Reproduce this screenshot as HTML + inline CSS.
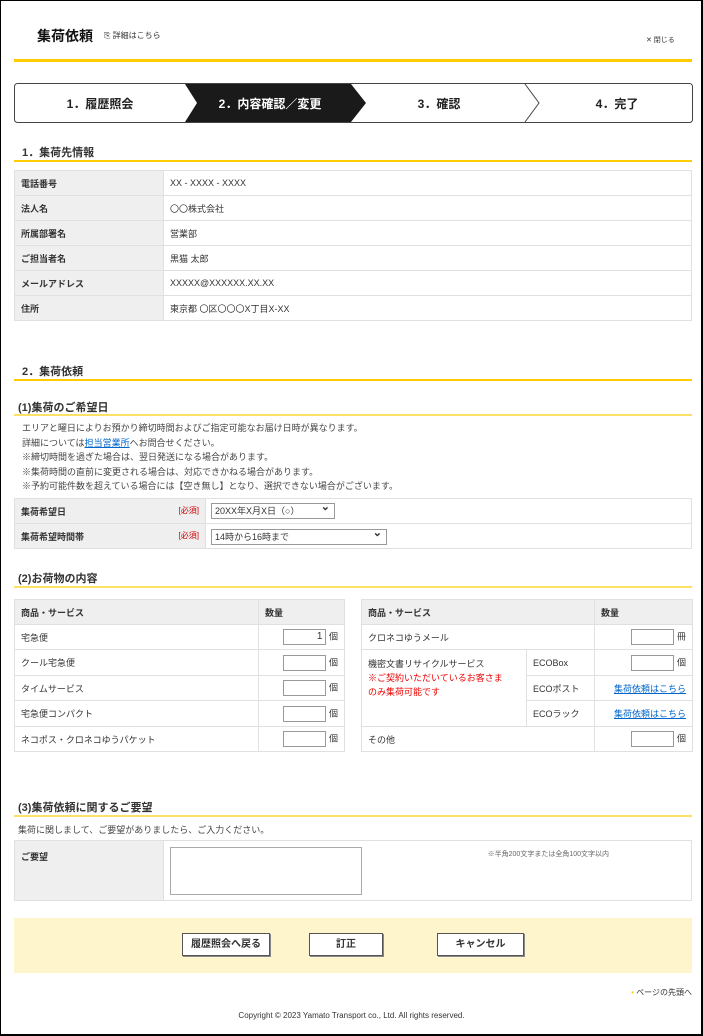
<!DOCTYPE html>
<html><head><meta charset="utf-8"><style>
*{margin:0;padding:0;box-sizing:border-box}
body{width:703px;height:1036px;background:#fff;font-family:"Liberation Sans","Noto Sans CJK JP",sans-serif;color:#333;position:relative;overflow:hidden;font-size:9px}
.a{position:absolute}
.frame{left:0;top:0;width:703px;height:1036px;border:1px solid #000;border-width:1px 2px 2px 1px}
.yl{background:#ffcc00}
.yl2{background:#ffe066}
.h{font-weight:bold;font-size:11px;color:#333}
table{border-collapse:collapse;position:absolute}
td{border:1px solid #e0e0e0;font-size:9px;padding:0 6px;color:#333}
td.l{background:#efefef;font-weight:bold}
.inp{display:inline-block;width:43px;height:16px;border:1px solid #999;vertical-align:middle;text-align:right;padding-right:3px;font-size:10px;line-height:14px}
.sel{position:absolute;border:1px solid #999;background:#fff;font-size:9px;padding-left:3px;line-height:14px;height:16px}
.sel:after{content:"⌄";position:absolute;right:4px;top:-4px;font-size:11px;font-weight:bold}
.btn{position:absolute;border:1px solid #555;background:#fff;top:933px;height:23px;font-weight:bold;font-size:10px;text-align:center;line-height:21px;box-shadow:1px 1px 0 #888}
a{color:#0066cc;text-decoration:underline}
</style></head><body>
<div class="a frame"></div>
<div class="a" style="left:37px;top:26px;font-size:14px;font-weight:bold;color:#111">集荷依頼</div>
<div class="a" style="left:104px;top:30px;font-size:8px;color:#333">⎘ 詳細はこちら</div>
<div class="a" style="left:646px;top:35px;font-size:7px;color:#333">✕ 閉じる</div>
<div class="a yl" style="left:14px;top:59px;width:678px;height:3px"></div>

<svg class="a" style="left:14px;top:83px" width="679" height="40">
<rect x="0.5" y="0.5" width="678" height="39" rx="3" fill="#fff" stroke="#444"/>
<polygon points="171,1 337,1 352,20 337,39 171,39 183,20" fill="#1a1a1a"/>
<polyline points="511,1 525,20 511,39" fill="none" stroke="#444"/>
<text x="86" y="25" font-size="12" font-weight="bold" fill="#222" text-anchor="middle" font-family="Liberation Sans,Noto Sans CJK JP,sans-serif">1．履歴照会</text>
<text x="256" y="25" font-size="12" font-weight="bold" fill="#fff" text-anchor="middle" font-family="Liberation Sans,Noto Sans CJK JP,sans-serif">2．内容確認／変更</text>
<text x="425" y="25" font-size="12" font-weight="bold" fill="#222" text-anchor="middle" font-family="Liberation Sans,Noto Sans CJK JP,sans-serif">3．確認</text>
<text x="603" y="25" font-size="12" font-weight="bold" fill="#222" text-anchor="middle" font-family="Liberation Sans,Noto Sans CJK JP,sans-serif">4．完了</text>
</svg>

<div class="a h" style="left:22px;top:144px">1．集荷先情報</div>
<div class="a yl" style="left:14px;top:160px;width:678px;height:2px"></div>
<table style="left:14px;top:170px;width:678px">
<tr style="height:25px"><td class="l" style="width:149px">電話番号</td><td>XX - XXXX - XXXX</td></tr>
<tr style="height:25px"><td class="l">法人名</td><td>〇〇株式会社</td></tr>
<tr style="height:25px"><td class="l">所属部署名</td><td>営業部</td></tr>
<tr style="height:25px"><td class="l">ご担当者名</td><td>黒猫 太郎</td></tr>
<tr style="height:25px"><td class="l">メールアドレス</td><td>XXXXX@XXXXXX.XX.XX</td></tr>
<tr style="height:25px"><td class="l">住所</td><td>東京都 〇区〇〇〇X丁目X-XX</td></tr>
</table>

<div class="a h" style="left:22px;top:363px">2．集荷依頼</div>
<div class="a yl" style="left:14px;top:379px;width:678px;height:2px"></div>
<div class="a h" style="left:18px;top:399px">(1)集荷のご希望日</div>
<div class="a yl2" style="left:14px;top:414px;width:678px;height:2px"></div>
<div class="a" style="left:22px;top:421px;line-height:14.5px;font-size:9px;color:#444">エリアと曜日によりお預かり締切時間およびご指定可能なお届け日時が異なります。<br>詳細については<a>担当営業所</a>へお問合せください。<br>※締切時間を過ぎた場合は、翌日発送になる場合があります。<br>※集荷時間の直前に変更される場合は、対応できかねる場合があります。<br>※予約可能件数を超えている場合には【空き無し】となり、選択できない場合がございます。</div>
<table style="left:14px;top:498px;width:678px">
<tr style="height:25px"><td class="l" style="width:191px">集荷希望日<span style="float:right;color:#cc0000;font-weight:normal;font-size:8px">[必須]</span></td><td></td></tr>
<tr style="height:25px"><td class="l">集荷希望時間帯<span style="float:right;color:#cc0000;font-weight:normal;font-size:8px">[必須]</span></td><td></td></tr>
</table>
<div class="sel" style="left:211px;top:503px;width:124px">20XX年X月X日（○）</div>
<div class="sel" style="left:211px;top:529px;width:176px">14時から16時まで</div>

<div class="a h" style="left:18px;top:570px">(2)お荷物の内容</div>
<div class="a yl2" style="left:14px;top:586px;width:678px;height:2px"></div>
<table style="left:14px;top:599px;width:331px">
<tr style="height:25px;background:#efefef;font-weight:bold"><td class="l" style="width:244px">商品・サービス</td><td class="l">数量</td></tr>
<tr style="height:25px"><td>宅急便</td><td style="text-align:right"><span class="inp">1</span> 個</td></tr>
<tr style="height:26px"><td>クール宅急便</td><td style="text-align:right"><span class="inp"></span> 個</td></tr>
<tr style="height:25px"><td>タイムサービス</td><td style="text-align:right"><span class="inp"></span> 個</td></tr>
<tr style="height:26px"><td>宅急便コンパクト</td><td style="text-align:right"><span class="inp"></span> 個</td></tr>
<tr style="height:25px"><td>ネコポス・クロネコゆうパケット</td><td style="text-align:right"><span class="inp"></span> 個</td></tr>
</table>
<table style="left:361px;top:599px;width:332px">
<tr style="height:25px"><td class="l" colspan="2">商品・サービス</td><td class="l" style="width:98px">数量</td></tr>
<tr style="height:25px"><td colspan="2">クロネコゆうメール</td><td style="text-align:right"><span class="inp"></span> 冊</td></tr>
<tr style="height:26px"><td rowspan="3" style="width:165px;vertical-align:top;padding-top:7px;line-height:14px">機密文書リサイクルサービス<br><span style="color:#ee0000">※ご契約いただいているお客さま<br>のみ集荷可能です</span></td><td>ECOBox</td><td style="text-align:right"><span class="inp"></span> 個</td></tr>
<tr style="height:25px"><td>ECOポスト</td><td style="text-align:right"><a>集荷依頼はこちら</a></td></tr>
<tr style="height:26px"><td>ECOラック</td><td style="text-align:right"><a>集荷依頼はこちら</a></td></tr>
<tr style="height:25px"><td colspan="2">その他</td><td style="text-align:right"><span class="inp"></span> 個</td></tr>
</table>

<div class="a h" style="left:18px;top:799px">(3)集荷依頼に関するご要望</div>
<div class="a yl2" style="left:14px;top:815px;width:678px;height:2px"></div>
<div class="a" style="left:18px;top:823px;font-size:9px;color:#444">集荷に関しまして、ご要望がありましたら、ご入力ください。</div>
<table style="left:14px;top:840px;width:678px">
<tr style="height:60px"><td class="l" style="width:149px;vertical-align:top;padding-top:9px">ご要望</td><td style="vertical-align:top;padding-top:8px"><span style="float:right;margin-right:76px;font-size:7px;color:#666">※半角200文字または全角100文字以内</span></td></tr>
</table>
<div class="a" style="left:170px;top:847px;width:192px;height:48px;border:1px solid #aaa;background:#fff"></div>
<div class="a" style="left:14px;top:918px;width:678px;height:55px;background:#fff5cc"></div>
<div class="btn" style="left:182px;width:88px">履歴照会へ戻る</div>
<div class="btn" style="left:309px;width:74px">訂正</div>
<div class="btn" style="left:437px;width:87px">キャンセル</div>
<div class="a" style="right:11px;top:987px;font-size:8px;color:#333"><span style="color:#ffcc00">•</span> ページの先頭へ</div>
<div class="a" style="left:0;width:703px;top:1011px;text-align:center;font-size:8px;color:#333">Copyright © 2023 Yamato Transport co., Ltd. All rights reserved.</div>
</body></html>
